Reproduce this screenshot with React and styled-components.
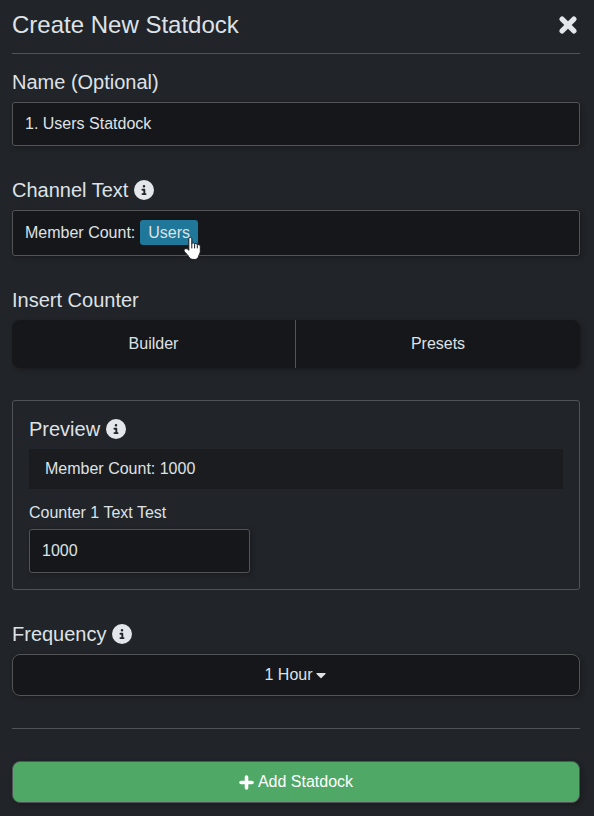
import React from 'react'
import styled, { createGlobalStyle, css } from 'styled-components'
import { FaCaretDown } from 'react-icons/fa'
import { FaCircleInfo } from 'react-icons/fa6'

function App() {
    return (
        <>
            <GlobalStyle />
            <Container>
                <Header>
                    <Title>Create New Statdock</Title>
                    <CloseButton aria-label="Close">
                        <svg width="18" height="18" viewBox="0 0 18 18">
                            <path d="M3.1 3.1 14.9 14.9M14.9 3.1 3.1 14.9" />
                        </svg>
                    </CloseButton>
                </Header>

                <Section>
                    <Label>Name (Optional)</Label>
                    <Input defaultValue="1. Users Statdock" />
                </Section>

                <Section>
                    <Label>Channel Text <FaCircleInfo /></Label>
                    <ChannelText>
                        Member Count:
                        <Counter>
                            Users
                            <HandCursor />
                        </Counter>
                    </ChannelText>
                </Section>

                <Section>
                    <Label>Insert Counter</Label>
                    <ButtonGroup>
                        <GroupButton>Builder</GroupButton>
                        <GroupButton>Presets</GroupButton>
                    </ButtonGroup>
                </Section>

                <PreviewCard>
                    <Label>Preview <FaCircleInfo /></Label>
                    <PreviewText>Member Count: 1000</PreviewText>
                    <SmallLabel>Counter 1 Text Test</SmallLabel>
                    <Input $width="221px" defaultValue="1000" />
                </PreviewCard>

                <Section>
                    <Label>Frequency <FaCircleInfo /></Label>
                    <Button>
                        1 Hour
                        <CaretIcon />
                    </Button>
                </Section>

                <Divider />

                <Button $success>
                    <PlusIcon width="15" height="15" viewBox="0 0 15 15">
                        <path d="M7.5 2v11M2 7.5h11" />
                    </PlusIcon>
                    Add Statdock
                </Button>
            </Container>
        </>
    )
}

function HandCursor() {
    return (
        <Cursor width="19" height="25" viewBox="0 0 19 25">
            <path d="M5.8 13.8V3.1c0-2.2 3-2.2 3 0v4.7c.5-1.5 2.8-1.2 2.8.4.6-1.2 2.7-.8 2.7.8.8-.9 3-.4 3 1.2v5.3c0 2.2-1.5 3.2-1.9 5.2-.3 1.9-1.9 2.8-4.3 2.8-3 0-4.3-.7-5.3-2.7-.9-1.8-3-3.4-4.4-5.4-1.4-2.2 1.4-4.3 4.4-1.6z" />
            <path d="M8.8 8v4M11.6 8.6V12M14.3 9.6V12" />
        </Cursor>
    )
}

export default App

const GlobalStyle = createGlobalStyle`
    * {
        box-sizing: border-box;
    }

    body {
        margin: 0;
        background: #212428;
        color: #dee2e6;
        font-family: "Liberation Sans", Arial, sans-serif;
        font-size: 16px;
        line-height: 24px;
    }

    button, input {
        font: inherit;
        color: inherit;
    }
`

const field = css`
    background: #16171a;
    border: 1px solid #515356;
    box-shadow: 2px 2px 4px rgba(22, 23, 26, 0.6);
`

const Container = styled.div`
    height: 816px;
    padding: 0 14px 0 12px;
`

const Header = styled.div`
    height: 54px;
    display: flex;
    align-items: center;
    justify-content: space-between;
    padding: 0 3px 4px 0;
    border-bottom: 1px solid #515356;
    margin-bottom: 16px;
`

const Title = styled.div`
    font-size: 24px;
    line-height: 28px;
`

const CloseButton = styled.button`
    display: flex;
    padding: 0;
    border: none;
    background: none;
    cursor: pointer;

    path {
        stroke: #e3e6ea;
        stroke-width: 5.2;
        stroke-linecap: round;
    }
`

const Section = styled.div`
    margin-bottom: 32px;
`

const Label = styled.div`
    display: flex;
    align-items: center;
    gap: 5.6px;
    height: 24px;
    margin-bottom: 8px;
    font-size: 20px;

    svg {
        color: #e3e6ea;
        margin-bottom: 1px;
    }
`

const Input = styled.input`
    ${field}
    display: block;
    width: ${props => props.$width || '100%'};
    height: 44px;
    padding: 0 12px;
    border-radius: 3px;
    outline: none;
`

const ChannelText = styled.div`
    ${field}
    display: flex;
    align-items: center;
    gap: 5px;
    height: 46px;
    padding: 0 12px;
    border-radius: 3px;
`

const Counter = styled.span`
    position: relative;
    height: 25px;
    margin-bottom: 1px;
    padding: 0 8px;
    border-radius: 3px;
    line-height: 26px;
    background: #1f7799;
`

const Cursor = styled.svg`
    position: absolute;
    left: 43px;
    top: 16px;

    path {
        fill: #fff;
        stroke: #16171f;
        stroke-width: 1;
        stroke-linecap: round;
    }
`

const ButtonGroup = styled.div`
    display: grid;
    grid-template-columns: 283px 1fr;
    height: 48px;
    border-radius: 8px;
    overflow: hidden;
    background: #16171a;
    box-shadow: 2px 2px 4px rgba(22, 23, 26, 0.6);
`

const GroupButton = styled.button`
    padding: 0;
    border: none;
    background: none;
    cursor: pointer;

    & + & {
        border-left: 1px solid #515356;
    }
`

const PreviewCard = styled.div`
    height: 190px;
    padding: 16px;
    margin-bottom: 32px;
    border: 1px solid #515356;
    border-radius: 3px;
`

const PreviewText = styled.div`
    height: 40px;
    padding: 8px 16px;
    background: #1b1c1f;
`

const SmallLabel = styled.div`
    margin: 12px 0 4px;
`

const Button = styled.button`
    ${field}
    display: flex;
    align-items: center;
    justify-content: center;
    gap: ${props => props.$success ? '4px' : '3px'};
    width: 100%;
    height: 42px;
    padding: 0 ${props => props.$success ? '0' : '2px'} 0 0;
    border-radius: 8px;
    cursor: pointer;

    ${props => props.$success && css`
        background: #4fa866;
        color: #fff;
    `}
`

const Divider = styled.div`
    height: 1px;
    margin-bottom: 32px;
    background: #515356;
`

const CaretIcon = styled(FaCaretDown)`
    width: 10px;
    height: 16px;
`

const PlusIcon = styled.svg`
    path {
        stroke: #fff;
        stroke-width: 3.6;
        stroke-linecap: round;
    }
`
